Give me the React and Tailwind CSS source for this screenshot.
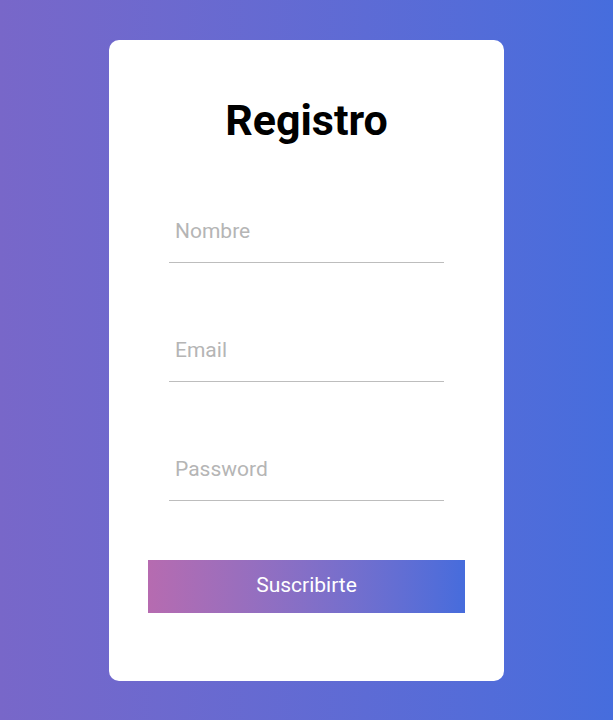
export default function App() {
  const fields = ["Nombre", "Email", "Password"];
  return (
    <div
      className="h-screen w-full flex items-center justify-center bg-gradient-to-r from-[#7867c9] to-[#466ddd]"
      style={{ fontFamily: "Roboto, 'Liberation Sans', sans-serif" }}
    >
      <div className="w-[395px] bg-white rounded-[10px] flex flex-col items-center pt-[56px] pb-[68px]">
        <h1 className="text-[43px] leading-[48px] font-bold text-black">Registro</h1>
        {fields.map((f, i) => (
          <input
            key={f}
            type={f === "Password" ? "password" : "text"}
            placeholder={f}
            className="mt-[64px] w-[275px] pt-[11px] pb-[19px] px-[6px] text-[21px] leading-[24px] border-b border-[#bdbdbd] outline-none placeholder:text-[#b5b5b5] text-gray-700"
          />
        ))}
        <button className="mt-[59px] w-[317px] h-[53px] text-[21px] text-white bg-gradient-to-r from-[#b66bb0] to-[#466cdc]">
          Suscribirte
        </button>
      </div>
    </div>
  );
}
